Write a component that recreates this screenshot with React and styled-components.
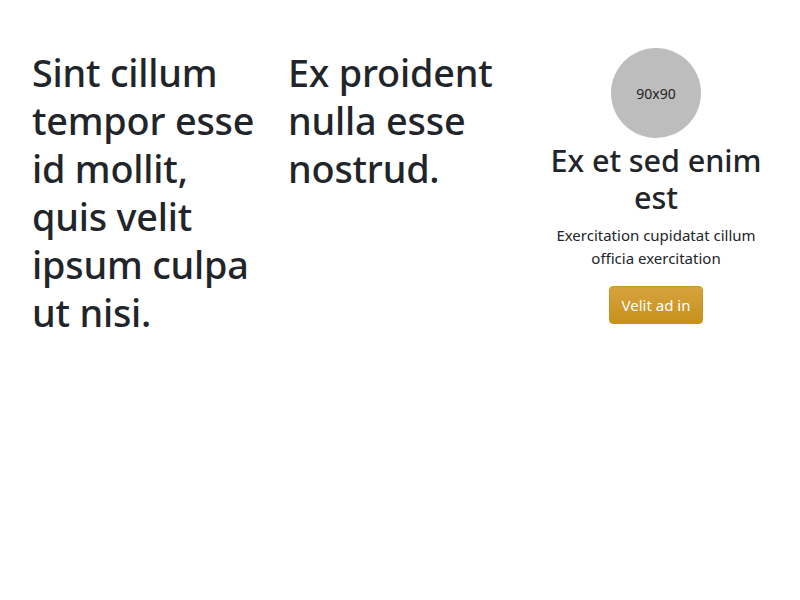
import React from "react";
import styled, { createGlobalStyle } from "styled-components";

const Global = createGlobalStyle`
  html, body { margin: 0; padding: 0; background: #fff; }
  body { font-family: "Noto Sans", "Open Sans", sans-serif; color: #212529; }
  * { box-sizing: border-box; }
`;

const Container = styled.div`
  padding: 48px 16px;
  width: 800px;
`;

const Row = styled.div`
  display: grid;
  grid-template-columns: repeat(3, 1fr);
`;

const Col = styled.div`
  padding: 0 16px;
  display: flex;
  flex-direction: column;
  align-items: ${(p) => (p.$center ? "center" : "stretch")};
  text-align: ${(p) => (p.$center ? "center" : "left")};
`;

const Heading = styled.h1`
  margin: 1px 0 0;
  font-size: 37.8px;
  font-weight: 500;
  line-height: 48px;
  letter-spacing: -0.2px;
`;

const Avatar = styled.div`
  width: 90px;
  height: 90px;
  border-radius: 50%;
  background: #bdbdbd;
  display: flex;
  align-items: center;
  justify-content: center;
  font-size: 14px;
  color: #222;
`;

const Title = styled.h2`
  margin: 4px 0 8px;
  font-size: 30.6px;
  font-weight: 500;
  line-height: 37px;
  letter-spacing: -0.1px;
`;

const Text = styled.p`
  margin: 0 0 16px;
  font-size: 15px;
  line-height: 23px;
`;

const Button = styled.button`
  font-family: inherit;
  font-size: 15px;
  color: #fff;
  border: 1px solid #c8931f;
  border-radius: 4px;
  padding: 0 12px;
  height: 38px;
  background: linear-gradient(#d6a23e, #c8911c);
  cursor: pointer;
`;

export default function App() {
  return (
    <>
      <Global />
      <Container>
        <Row>
          <Col>
            <Heading>Sint cillum tempor esse id mollit, quis velit ipsum culpa ut nisi.</Heading>
          </Col>
          <Col>
            <Heading>Ex proident nulla esse nostrud.</Heading>
          </Col>
          <Col $center>
            <Avatar>90x90</Avatar>
            <Title>Ex et sed enim est</Title>
            <Text>Exercitation cupidatat cillum officia exercitation</Text>
            <Button>Velit ad in</Button>
          </Col>
        </Row>
      </Container>
    </>
  );
}
